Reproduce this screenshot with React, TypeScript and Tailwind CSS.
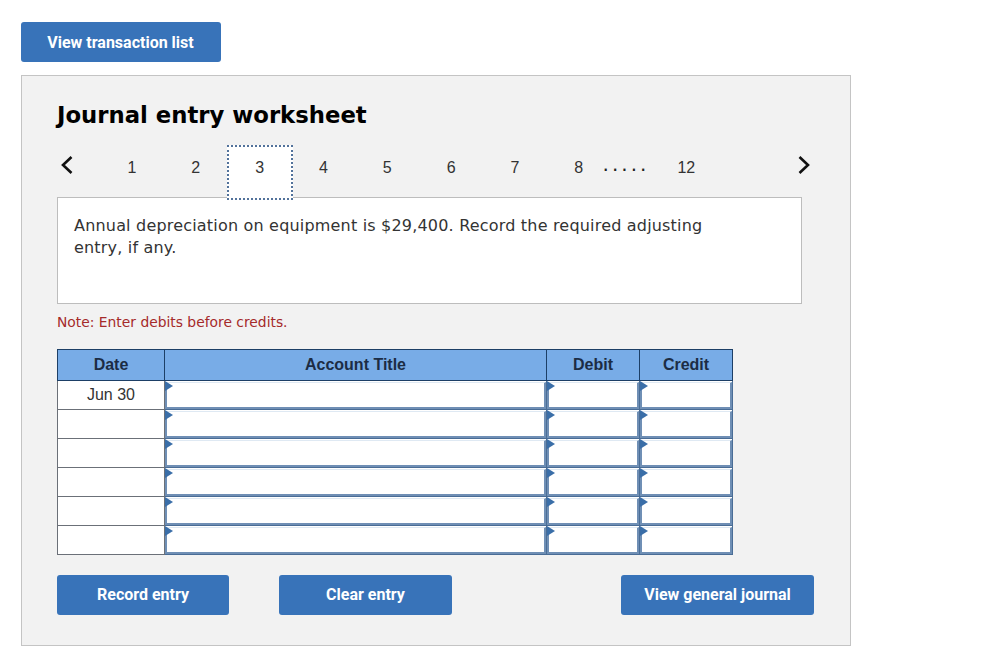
const Cell = () => (
  <td className="relative h-[29px] border border-[#4a6d96] bg-white p-0">
    <div className="h-[27px] border-2 border-t border-b-2 border-[#6f8fb5] border-t-[#dfe9f3] bg-white"></div>
    <span className="absolute left-0 top-0 h-0 w-0 border-y-[5px] border-l-[8px] border-y-transparent border-l-[#3a6ea8]"></span>
  </td>
);

const Chevron = ({ dir }: { dir: "l" | "r" }) => (
  <svg width="14" height="20" viewBox="0 0 14 20" fill="none" stroke="#111" strokeWidth="2.6">
    <path d={dir === "l" ? "M11.5 2 L3 10 L11.5 18" : "M2.5 2 L11 10 L2.5 18"} />
  </svg>
);

const Num = ({ n }: { n: string }) => (
  <div className="flex w-[63.8px] justify-center text-[16px] text-[#333]">{n}</div>
);

const btn =
  "flex h-10 items-center justify-center rounded-[3px] bg-[#3873b9] font-['Roboto',sans-serif] text-[16px] font-bold text-white";

export default function App() {
  const rows = ["Jun 30", "", "", "", "", ""];
  return (
    <div className="h-[669px] w-[981px] bg-white pl-[21px] pt-[22px] font-['Liberation_Sans',sans-serif]">
      <button className={btn + " w-[200px] pr-[1px] pt-[1px]"}>View transaction list</button>
      <div className="mt-[13px] h-[571px] w-[830px] border border-[#c4c4c4] bg-[#f2f2f2] pl-[35px] pt-[23px]">
        <h1 className="font-['DejaVu_Sans',sans-serif] text-[22.75px] font-bold leading-[32px] text-black">
          Journal entry worksheet
        </h1>
        <div className="mt-[14px] flex h-[52px] w-[745px] items-start">
          <div className="mt-[10px] flex w-[43px] pl-[3px]"><Chevron dir="l" /></div>
          <div className="flex items-start pt-[11px]"><Num n="1" /><Num n="2" /></div>
          <div className="relative -ml-[1px] flex h-[55px] w-[66px] justify-center border-2 border-dotted border-[#52729b] bg-white pt-[9px] text-[16px] text-[#333]">3</div>
          <div className="-ml-[1px] flex items-start pt-[11px]"><Num n="4" /><Num n="5" /><Num n="6" /><Num n="7" /><Num n="8" /></div>
          <div className="-ml-[8px] mt-[4px] font-['DejaVu_Sans',sans-serif] text-[20px] leading-[30px] tracking-[3px] text-[#222]">.....</div>
          <div className="ml-[28px] pt-[11px] text-[16px] text-[#333]">12</div>
          <div className="ml-auto mt-[10px] -mr-[9px] flex"><Chevron dir="r" /></div>
        </div>
        <div className="h-[107px] w-[745px] border border-[#bdbdbd] bg-white pl-[16px] pr-[80px] pt-[17px] font-['DejaVu_Sans',sans-serif] text-[16px] leading-[22px] tracking-[0.19px] text-[#333]">
          Annual depreciation on equipment is $29,400. Record the required adjusting entry, if any.
        </div>
        <p className="mt-[10px] font-['DejaVu_Sans',sans-serif] text-[13.85px] leading-[17px] text-[#a52a2a]">
          Note: Enter debits before credits.
        </p>
        <table className="mt-[18px] w-[675px] table-fixed border-collapse text-[16px]">
          <colgroup>
            <col className="w-[107px]" />
            <col className="w-[382px]" />
            <col className="w-[93px]" />
            <col className="w-[93px]" />
          </colgroup>
          <thead>
            <tr className="h-[31px] bg-[#78ace7] font-bold text-[#1c2c44]">
              {["Date", "Account Title", "Debit", "Credit"].map((h) => (
                <th key={h} className="border border-[#1d3f66] p-0 text-center font-bold">{h}</th>
              ))}
            </tr>
          </thead>
          <tbody>
            {rows.map((d, i) => (
              <tr key={i} className="h-[29px]">
                <td className="border border-[#6b7078] bg-white p-0 text-center text-[#333]">{d}</td>
                <Cell />
                <Cell />
                <Cell />
              </tr>
            ))}
          </tbody>
        </table>
        <div className="mt-[20px] flex w-[757px]">
          <button className={btn + " w-[172px]"}>Record entry</button>
          <button className={btn + " ml-[50px] w-[173px]"}>Clear entry</button>
          <button className={btn + " ml-auto w-[193px]"}>View general journal</button>
        </div>
      </div>
    </div>
  );
}
